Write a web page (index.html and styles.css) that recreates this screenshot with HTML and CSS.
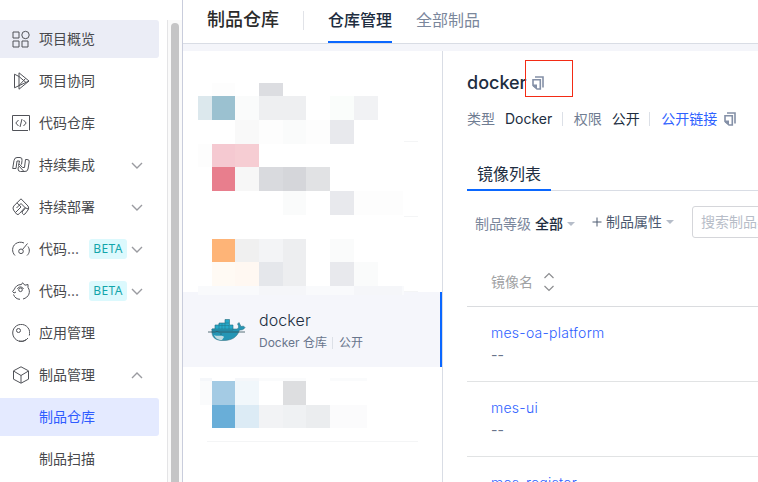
FILE: index.html
```html
<!DOCTYPE html>
<html lang="zh-CN">
<head>
<meta charset="utf-8">
<title>制品仓库</title>
<link rel="stylesheet" href="styles.css">
</head>
<body>
<svg width="0" height="0" class="defs">
  <symbol id="copy" viewBox="0 0 12 14"><path d="M3 1H11V11.500M1 3.700H8.300V13H5L1 9.500Z" fill="none" stroke="currentColor" stroke-width="1.6"/><path d="M1 8.500H5V13L1 10.500Z" fill="currentColor"/></symbol>
  <symbol id="down" viewBox="0 0 12 7"><path d="M1 1L6 6L11 1" fill="none" stroke="currentColor" stroke-width="1.4"/></symbol>
</svg>
<div class="app">
  <aside class="sidebar">
    <nav class="menu">
      <a class="item hover"><svg class="ico" viewBox="0 0 18 18"><path d="M1 2H7V8H1ZM1 11H7V17H1ZM10 11H16V17H10Z"/><circle cx="13.5" cy="5" r="3.7"/></svg><span>项目概览</span></a>
      <a class="item"><svg class="ico" viewBox="0 0 18 18"><path d="M7 4.500L2.500 2.200V15.800L17 9L7 .8V17.200L17 9M7 4.500L14 10.500M7 13.500L13.500 6.500"/></svg><span>项目协同</span></a>
      <a class="item"><svg class="ico" viewBox="0 0 18 18"><path d="M16 16.500H.5V1.500H17.500V16.500M6.500 6L3.800 9L6.500 12M11.500 6L14.200 9L11.500 12M10 5L8 13"/></svg><span>代码仓库</span></a>
      <a class="item"><svg class="ico" viewBox="0 0 18 18"><path d="M.7 12.500L2 4.500Q2.500 1.500 5 1.500H8Q10.500 1.500 10 4.500L9.500 8.500M.7 12.500H4L5 5H7.500L6.500 9.500L12 15.500Q15.500 16 16 13L17.200 6Q17.700 3.500 15 3.500H13.500L12.500 11.500H10.500L7.200 8M6.500 10.500L6 13Q6 15.500 8.500 15.500H12"/></svg><span>持续集成</span><svg class="chev"><use href="#down"/></svg></a>
      <a class="item"><svg class="ico" viewBox="0 0 18 18"><path d="M9 .8L16 8Q17.500 10 16 12L13 16Q11.500 17.500 10.500 15.500L10 14L13.500 10L9 5.500M9 .8L1.800 8Q.3 10 1.500 12L4.500 16Q6 17.500 7.500 15.500L13 9.500M5 4.800L9 9L4 14M9 5.500L4.500 10M13.500 10L16.500 11"/></svg><span>持续部署</span><svg class="chev"><use href="#down"/></svg></a>
      <a class="item"><svg class="ico" viewBox="0 0 18 18"><path d="M3 15.500C-.5 12 0 6.500 3.500 3.800C6 2 9 1.700 12 3M16 6.500C18 9.500 17.800 13 15 15.500M10.500 9.500L15.500 3.500"/><circle cx="9" cy="11.300" r="2.300"/></svg><span>代码...</span><b class="beta">BETA</b><svg class="chev"><use href="#down"/></svg></a>
      <a class="item"><svg class="ico" viewBox="0 0 18 18"><path d="M1.500 12.500C2.500 15.500 5 17.300 8 17.300M11 17C17 15.500 19 9.500 16 5.500V2.500L13 3.200L10.500 .8L9.500 2.500C5.500 2.500 3.500 4.500 2.500 7L.6 9.500L2 11L4 10"/><circle cx="8.500" cy="7.800" r="1.800"/><path d="M5.500 7C6 4.500 10 4 11.500 7"/></svg><span>代码...</span><b class="beta">BETA</b><svg class="chev"><use href="#down"/></svg></a>
      <a class="item"><svg class="ico" viewBox="0 0 18 18"><path d="M16 14A8.500 8.500 0 1 1 17.300 11.500M14.500 15.500A8.500 8.500 0 0 1 7 17.200"/><circle cx="6.500" cy="6.500" r="2"/></svg><span>应用管理</span></a>
      <a class="item"><svg class="ico" viewBox="0 0 18 18"><path d="M9 .8L16.500 4.800V13.200L9 17.200L1.500 13.200V4.800ZM2 5.300L9 9.500L16 5.300M9 9.500V17"/></svg><span>制品管理</span><svg class="chev up"><use href="#down"/></svg></a>
      <a class="item sub active"><span>制品仓库</span></a>
      <a class="item sub"><span>制品扫描</span></a>
    </nav>
    <div class="track"><div class="thumb"></div></div>
  </aside>
  <main class="main">
    <header class="top">
      <h1>制品仓库</h1><i class="split"></i>
      <a class="tab on">仓库管理</a><a class="tab">全部制品</a>
    </header>
    <div class="body">
      <section class="repos">
        <svg class="mosaic upper" viewBox="183 51 259 241" shape-rendering="crispEdges">
          <path fill="#fafbfb" d="M235 96h24v24h-24zM283 120h23v24h-23zM283 191h23v24h-23zM330 239h24v23h-24zM354 262h24v24h-24z"/>
          <path fill="#fdfdfd" d="M212 83h23v13h-23zM198 144h14v23h-14zM259 120h24v24h-24zM306 120h24v24h-24zM354 191h49v24h-49z"/>
          <path fill="#dcdde1" d="M259 83h24v13h-24z"/><path fill="#dce8ed" d="M198 96h14v24h-14z"/><path fill="#9bc1d0" d="M212 96h23v24h-23z"/>
          <path fill="#eeeff1" d="M259 96h47v24h-47z"/><path fill="#fafdfb" d="M330 96h24v24h-24z"/><path fill="#f1f2f4" d="M354 96h24v24h-24z"/>
          <path fill="#f9f9f9" d="M235 120h24v24h-24z"/><path fill="#e8e9ed" d="M330 120h24v24h-24zM330 191h24v24h-24zM330 262h24v24h-24z"/>
          <path fill="#f5c9d1" d="M212 144h23v23h-23z"/><path fill="#f6cdd3" d="M235 144h24v23h-24z"/><path fill="#e87e8d" d="M212 167h23v24h-23z"/><path fill="#f7f7f7" d="M235 167h24v24h-24z"/>
          <path fill="#d9dade" d="M259 167h24v24h-24z"/><path fill="#d5d6da" d="M283 167h23v24h-23z"/><path fill="#e1e2e4" d="M306 167h24v24h-24z"/>
          <path fill="#feb477" d="M212 239h23v23h-23z"/><path fill="#f0f0f0" d="M235 239h24v23h-24z"/><path fill="#f3f4f6" d="M259 239h24v23h-24z"/><path fill="#edeef0" d="M283 239h23v47h-23z"/>
          <path fill="#fffaf4" d="M212 262h23v24h-23z"/><path fill="#fff8f2" d="M235 262h24v24h-24z"/><path fill="#e5e7eb" d="M259 262h24v24h-24z"/>
          <path fill="#f9fafc" d="M198 286h206v9h-206z"/><path fill="#f5f6f9" d="M259 286h47v9h-47zM354 286h48v9h-48z"/>
          <path fill="#f4f5f6" d="M404 141h14v1h-14zM404 216h14v1h-14zM404 291h14v1h-14z"/>
        </svg>
        <article class="repo">
          <svg class="whale" viewBox="0 0 38 24">
            <path d="M4 11H29C31 10.500 31 8 29.500 6L31 4.500L33 8.500C35 8 36 8 37 9.500C35.500 12 33.500 12 31.500 12C29 20 23 22.500 15 22.500C8 22.500 3 20 4 11Z" fill="#2596b5" stroke="#397587" stroke-width=".6"/>
            <path d="M4 12V11H7V7H11V5H17V1.500H21.500V7H25V12Z" fill="#27a9c9" stroke="#246d80" stroke-width=".6"/>
            <path d="M7 11H25M11 7.500H21M17 5H21M11 6V11M14 5V11M17 5V11M21 7V11" stroke="#247c92" stroke-width=".6"/>
            <path d="M6 17C10 19 14 16.500 16 19L14 22C10 22 7 20 6 17Z" fill="#c2dde2"/>
            <path d="M0 14H7L9 13.500L11 14H28H37" fill="none" stroke="#31505a" stroke-width=".8"/><circle cx="13" cy="16" r=".6" fill="#24434c"/>
          </svg>
          <div><h3>docker</h3><p>Docker 仓库<i></i>公开</p></div>
        </article>
        <svg class="mosaic lower" viewBox="183 367 259 115" shape-rendering="crispEdges">
          <path fill="#fafbfc" d="M200 378h12v27h-12zM259 378h47v3h-47zM330 378h37v3h-37z"/><path fill="#f5f7fa" d="M200 378h12v3h-12zM235 378h24v3h-24z"/>
          <path fill="#a4cbe4" d="M212 381h23v24h-23z"/><path fill="#f1f7fb" d="M235 381h24v24h-24z"/><path fill="#fff" d="M259 381h24v24h-24z"/><path fill="#dddee0" d="M283 381h23v24h-23z"/>
          <path fill="#69aed8" d="M212 405h23v23h-23z"/><path fill="#dcebf5" d="M235 405h24v23h-24z"/><path fill="#f2f3f5" d="M259 405h24v23h-24z"/><path fill="#eff1f3" d="M283 405h23v23h-23z"/><path fill="#ebedef" d="M306 405h24v23h-24z"/><path fill="#fbfbfc" d="M330 405h37v23h-37z"/>
          <path fill="#f4f5f6" d="M207 441h211v1h-211z"/>
        </svg>
      </section>
      <section class="detail">
        <div class="title"><h2>docker</h2><svg class="copy"><use href="#copy"/></svg><div class="mark"></div></div>
        <div class="meta"><span>类型</span><em>Docker</em><i></i><span>权限</span><em>公开</em><i></i><a>公开链接</a><svg class="copy"><use href="#copy"/></svg></div>
        <div class="tabs"><a>镜像列表</a></div>
        <div class="filters"><div class="level">制品等级 <strong>全部</strong><i class="caret"></i></div><div class="prop"><svg class="plus" viewBox="0 0 10 10"><path d="M5 .5V9.500M.5 5H9.500"/></svg>制品属性<i class="caret"></i></div><div class="search">搜索制品名称</div></div>
        <div class="thead">镜像名<svg class="sort" viewBox="0 0 12 20"><path d="M1.500 6L6 1.500L10.500 6M1.500 14L6 18.500L10.500 14"/></svg></div>
        <div class="row"><a>mes-oa-platform</a><p>--</p></div>
        <div class="row"><a>mes-ui</a><p>--</p></div>
        <div class="row"><a>mes-register</a><p>--</p></div>
      </section>
    </div>
  </main>
</div>
</body>
</html>
```
FILE: styles.css
```css
* { box-sizing: border-box; }
body { margin: 0; height: 482px; overflow: hidden; background: #fff; color: #202d40; font: 14px/20px Inter, "Noto Sans CJK SC", sans-serif; }
h1, h2, h3, p { margin: 0; font-weight: 400; }
i, em { font-style: normal; }
a, span, h1, strong, .level, .prop, .thead, .search { white-space: nowrap; }
.defs { position: absolute; }
.app { display: flex; width: 758px; height: 482px; overflow: hidden; }

.sidebar { flex: none; display: flex; width: 183px; padding-top: 20px; border-right: 1px solid #c9cddc; }
.menu { width: 167px; flex: none; display: flex; flex-direction: column; gap: 4px; }
.item { flex: none; display: flex; align-items: center; width: 159px; height: 38px; padding-left: 12px; border-radius: 0 3px 3px 0; color: #48494d; }
.item.hover { background: #ebedf6; }
.item.active { background: #e4eaff; color: #2f5bff; }
.item.sub { padding-left: 39px; }
.ico { width: 18px; height: 18px; margin-right: 9px; fill: none; stroke: #505258; stroke-width: 1; flex: none; }
.chev { width: 12px; height: 7px; margin: 0 16px 0 auto; color: #9a9ba0; }
.chev.up { transform: rotate(180deg); }
.beta { width: 38px; height: 20px; margin-left: auto; border-radius: 3px; background: #dcf9fd; color: #12a5aa; font: 400 12px/20px "Noto Sans", sans-serif; letter-spacing: .4px; text-align: center; }
.beta + .chev { margin-left: 4px; }
.track { width: 15px; border-left: 1px solid #e4e4e6; background: #fafafa; padding: 3px 3px 0; }
.thumb { width: 8px; height: 500px; border-radius: 4px 4px 0 0; background: #c5c5c6; }

.main { flex: 1; min-width: 0; background: #f4f5fa; }
.top { display: flex; height: 44px; padding-left: 24px; background: #fff; border-bottom: 1px solid #d9dde5; }
.top h1 { font-size: 18px; line-height: 40px; font-weight: 500; color: #2b2b2b; }
.split { width: 1px; height: 19px; margin: 11px 24px 0 24px; background: #e1e3e8; }
.tab { height: 43px; margin-right: 24px; font-size: 16px; line-height: 40px; color: #7b879c; }
.tab.on { border-bottom: 2px solid #0a67ff; color: #202d40; font-weight: 500; }
.body { display: flex; height: 431px; margin-top: 7px; }
.repos { flex: none; width: 260px; border-right: 1px solid #d9dde5; background: #fff; }
.mosaic { display: block; width: 259px; overflow: visible; position: relative; }
.upper { height: 241px; z-index: 1; }
.lower { height: 115px; }
.repo { display: flex; height: 75px; padding: 18px 0 0 25px; border-right: 2px solid #0a67ff; background: #f5f6fb; }
.whale { width: 38px; height: 24px; margin: 8px 13px 0 0; }
.repo h3 { font-size: 16px; line-height: 21px; font-weight: 300; letter-spacing: .1px; }
.repo p { display: flex; align-items: center; font-size: 12px; line-height: 24px; color: #68758c; }
.repo i { width: 1px; height: 12px; margin: 0 6px 0 5px; background: #dce0e7; }

.detail { flex: 1; min-width: 0; padding: 18px 0 0 24px; background: #fff; overflow: hidden; }
.title { position: relative; display: flex; align-items: center; height: 28px; }
.title h2 { font-size: 18px; line-height: 28px; font-weight: 500; width: 65px; }
.copy { width: 12px; height: 14px; color: #8490a7; }
.mark { position: absolute; left: 58px; top: -9px; width: 48px; height: 37px; border: 1px solid #f32b15; }
.meta { display: flex; align-items: center; height: 20px; margin-top: 12px; color: #707d92; }
.meta em { color: #202d40; margin-left: 10px; }
.meta i { width: 1px; height: 14px; margin: 0 11px 0 10px; background: #dce0e7; }
.meta em + i { margin-left: 9.500px; }
.meta a { color: #2f62ff; margin-right: 7px; }
.tabs { display: flex; height: 32px; margin-top: 30px; border-bottom: 1px solid #d9dde5; }
.tabs a { height: 32px; padding: 0 10px; font-size: 16px; line-height: 30px; border-bottom: 2px solid #0a67ff; }
.filters { display: flex; align-items: center; height: 32px; margin-top: 15px; padding-left: 8px; }
.level { display: flex; align-items: center; color: #7b879c; margin-top: 3px; }
.level strong { margin-left: 4px; font-weight: 500; color: #202d40; }
.caret { border: 4px solid transparent; border-top: 4px solid #b6bdc9; border-bottom: 0; margin-left: 4px; }
.prop { display: flex; align-items: center; margin-left: 17px; color: #4d5a70; }
.plus { width: 10px; height: 10px; margin-right: 4px; fill: none; stroke: #4d5a70; }
.search { flex: none; width: 200px; height: 32px; margin-left: 18px; padding-left: 8px; border: 1px solid #d5d6da; border-radius: 3px; line-height: 30px; color: #b7bdc8; }
.thead { display: flex; align-items: center; height: 69px; padding: 20px 0 0 24px; border-bottom: 1px solid #dadcdf; color: #a0a1a3; }
.sort { width: 12px; height: 20px; margin-left: 10px; fill: none; stroke: #8c8d90; stroke-width: 1.2; }
.row { height: 75px; padding: 16px 0 0 24px; border-bottom: 1px solid #e1e3e4; }
.row a { display: block; line-height: 20px; font-weight: 300; letter-spacing: .25px; color: #2f62ff; }
.row p { line-height: 20px; margin-top: 2px; color: #68758c; }
```
